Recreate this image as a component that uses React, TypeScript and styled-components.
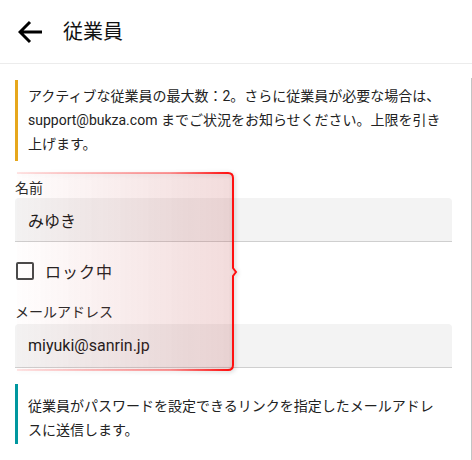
import styled, { createGlobalStyle } from "styled-components";

const GlobalStyle = createGlobalStyle`
	body {
		margin: 0;
		background: #fff;
		font-family: Roboto, "Noto Sans CJK JP", sans-serif;
		color: #1f1f1f;
	}
	* {
		box-sizing: border-box;
	}
`;

const App = () => {
	return (
		<Page>
			<GlobalStyle />
			<Header>
				<BackButton aria-label="back">
					<svg width="26" height="24" viewBox="0 0 26 24">
						<path
							d="M12 2 L2 12 L12 22 M2 12 H24"
							fill="none"
							stroke="#000"
							strokeWidth="3"
							strokeLinejoin="miter"
						/>
					</svg>
				</BackButton>
				<Title>従業員</Title>
			</Header>
			<Main>
				<Note tone="warning">
					アクティブな従業員の最大数：2。さらに従業員が必要な場合は、support@bukza.com
					までご状況をお知らせください。上限を引き上げます。
				</Note>
				<Label>名前</Label>
				<Field value="みゆき" readOnly />
				<CheckRow>
					<CheckBox />
					<CheckLabel>ロック中</CheckLabel>
				</CheckRow>
				<Label $gap={19}>メールアドレス</Label>
				<Field value="miyuki@sanrin.jp" readOnly $gap={2} />
				<Note tone="info">
					<NoteLine>{"従業員がパスワードを設定できるリンクを指定したメールアドレ"}</NoteLine>
					<NoteLine>{"スに送信します。"}</NoteLine>
				</Note>
				<Highlight width="230" height="206" viewBox="0 0 230 206">
					<defs>
						<linearGradient id="hl-fill" x1="0" x2="1" y1="0" y2="0">
							<stop offset="0" stopColor="#e04848" stopOpacity="0.01" />
							<stop offset="1" stopColor="#d84848" stopOpacity="0.16" />
						</linearGradient>
						<linearGradient id="hl-stroke" x1="0" x2="1" y1="0" y2="0">
							<stop offset="0" stopColor="#ff2020" stopOpacity="0.12" />
							<stop offset="0.7" stopColor="#ff2020" stopOpacity="0.45" />
							<stop offset="0.97" stopColor="#ff1010" stopOpacity="1" />
						</linearGradient>
					</defs>
					<path
						d="M3 3 H214 Q219 3 219 8 V98 L222 102 L219 106 V195 Q219 200 214 200 H3 Z"
						fill="url(#hl-fill)"
					/>
					<path
						d="M3 3 H214 Q219 3 219 8 V98 L222 102 L219 106 V195 Q219 200 214 200 H3"
						fill="none"
						stroke="url(#hl-stroke)"
						strokeWidth="2"
					/>
				</Highlight>
			</Main>
		</Page>
	);
};
export default App;

// =============================================================================
// Styled Components
// =============================================================================
const Page = styled.div`
	width: 472px;
	height: 460px;
	overflow: hidden;
`;

const Header = styled.header`
	height: 64px;
	display: flex;
	align-items: center;
	padding-left: 18px;
	border-bottom: 1px solid #ececec;
`;

const BackButton = styled.div`
	display: flex;
	align-items: center;
	width: 45px;
	height: 24px;
`;

const Title = styled.h1`
	margin: 0;
	font-size: 20px;
	font-weight: 400;
	color: #111;
	line-height: 28px;
`;

const Main = styled.main`
	position: relative;
	margin-top: 14px;
	padding: 2px 19px 20px 15px;
	border-right: 1px solid #c4c4c4;
	display: flex;
	flex-direction: column;
`;

const Note = styled.div<{ tone: "warning" | "info" }>`
	border-left: 3px solid
		${(p) => (p.tone === "warning" ? "#e6a71c" : "#00979f")};
	padding: ${(p) =>
		p.tone === "warning" ? "4px 2px 5px 10px" : "10px 4px 2px 10px"};
	margin-top: ${(p) => (p.tone === "warning" ? "0" : "16px")};
	font-size: 14px;
	line-height: 24px;
	color: #222;
`;

const NoteLine = styled.div`
	white-space: nowrap;
`;

const Label = styled.div<{ $gap?: number }>`
	margin-top: ${(p) => p.$gap ?? 17}px;
	font-size: 14px;
	line-height: 20px;
	color: #2a2a2a;
`;

const Field = styled.input<{ $gap?: number }>`
	height: 44px;
	margin-top: ${(p) => p.$gap ?? 0}px;
	padding: 0 13px;
	border: none;
	border-bottom: 1px solid #cfcfcf;
	border-radius: 4px 4px 0 0;
	background: #f3f3f3;
	font-family: Roboto, "Noto Sans CJK JP", sans-serif;
	font-size: 16px;
	color: #1a1a1a;
	outline: none;
`;

const CheckRow = styled.label`
	margin-top: 17px;
	height: 24px;
	display: flex;
	align-items: center;
`;

const CheckBox = styled.span`
	width: 18px;
	height: 18px;
	margin-left: 1px;
	border: 2px solid #4a4a4a;
	border-radius: 2px;
`;

const CheckLabel = styled.span`
	margin-left: 11px;
	font-size: 16px;
	color: #222;
	letter-spacing: 1px;
`;

const Highlight = styled.svg`
	position: absolute;
	left: 14px;
	top: 92px;
	pointer-events: none;
	filter: drop-shadow(1px 1px 2px rgba(0, 0, 0, 0.22));
`;
